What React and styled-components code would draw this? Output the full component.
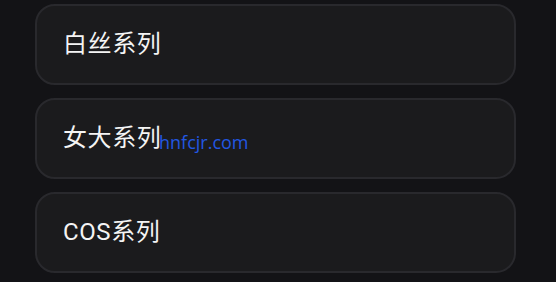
import React from 'react';
import styled, { createGlobalStyle } from 'styled-components';

const GlobalStyle = createGlobalStyle`
    html, body {
        margin: 0;
        padding: 0;
        background: #131316;
    }
    body {
        font-family: Roboto, "Noto Sans CJK SC", sans-serif;
    }
`;

const series = ['白丝系列', '女大系列', 'COS系列'];

const App = () => (
    <>
        <GlobalStyle />
        <Page>
            <List>
                {series.map(name => (
                    <Card key={name}>
                        <Name>{name}</Name>
                    </Card>
                ))}
            </List>
            <Watermark>hnfcjr.com</Watermark>
        </Page>
    </>
);

const Page = styled.div`
    position: relative;
    width: 556px;
    height: 282px;
    overflow: hidden;
    padding: 4px 0 0 35px;
    box-sizing: border-box;
`;

const List = styled.div`
    display: flex;
    flex-direction: column;
    gap: 13px;
    width: 481px;
`;

const Card = styled.div`
    box-sizing: border-box;
    height: 81px;
    display: flex;
    align-items: center;
    padding: 0 0 6px 26px;
    background: #1b1b1d;
    border: 2px solid #29292d;
    border-radius: 20px;
`;

const Name = styled.span`
    color: #f4f4f4;
    font-size: 24px;
    font-weight: 400;
    letter-spacing: 0.6px;
`;

const Watermark = styled.span`
    position: absolute;
    left: 159px;
    top: 130px;
    color: #2257e2;
    font-family: "Open Sans", sans-serif;
    font-size: 18px;
`;

export default App;
